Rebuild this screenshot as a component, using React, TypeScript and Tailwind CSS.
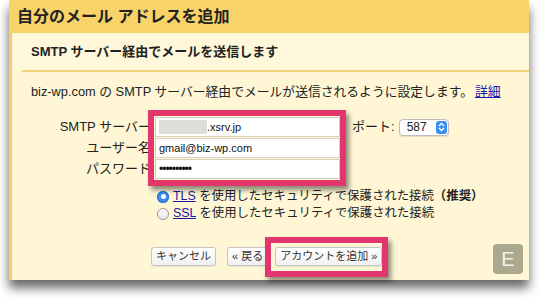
import React from 'react'

const font = { fontFamily: '"Liberation Sans", "Noto Sans CJK JP", sans-serif' }

function PinkFrame({ className }: { className: string }) {
  return (
    <div
      className={`pointer-events-none absolute border-[6px] border-[#e2366f] shadow-[3px_4px_5px_rgba(0,0,0,0.45)] ${className}`}
    />
  )
}

function Radio({ checked }: { checked?: boolean }) {
  return checked ? (
    <span className="flex h-[12px] w-[12px] items-center justify-center rounded-full bg-[#3b8ef0] shadow-[inset_0_0_0_1px_#2a6fc9]">
      <span className="h-[5px] w-[5px] rounded-full bg-white" />
    </span>
  ) : (
    <span className="h-[12px] w-[12px] rounded-full border border-[#9a9a9a] bg-gradient-to-b from-white to-[#e8e8e8]" />
  )
}

function Btn({ children }: { children: React.ReactNode }) {
  return (
    <button className="flex h-[19px] items-center rounded-[3px] border border-[#c4c4c4] bg-gradient-to-b from-white to-[#f1f1f1] px-[4px] text-[11px] text-[#333] shadow-[0_1px_1px_rgba(0,0,0,0.08)]">
      {children}
    </button>
  )
}

export default function App() {
  return (
    <div className="h-[300px] w-[539px] overflow-hidden bg-white" style={font}>
      <div className="ml-[9px] w-[520px] shadow-[0_8px_10px_rgba(0,0,0,0.6)]">
        <div className="flex h-[33px] items-center bg-[#f8d36a] pl-[8px] text-[16px] font-bold text-[#222]">
          自分のメール アドレスを追加
        </div>
        <div className="border-l-[3px] border-[#f3cf6c] bg-[#fef6d4]">
          <div className="flex h-[37px] items-center bg-[#fef7da] pl-[19px] text-[13px] font-bold text-[#222]">
            SMTP サーバー経由でメールを送信します
          </div>
          <div className="ml-[10px] h-[2px] bg-[#f2d478]" />
          <div className="flex h-[40px] items-center pl-[19px] text-[12.8px] text-[#222]">
            biz-wp.com の SMTP サーバー経由でメールが送信されるように設定します。
            <a className="ml-[2px] text-[#1a1aa8] underline">詳細</a>
          </div>

          <div className="mt-[5px] flex">
            <div className="flex w-[139px] flex-col items-end gap-[1px] text-[13px] text-[#222]">
              <div className="flex h-[20px] items-center">SMTP サーバー</div>
              <div className="flex h-[20px] items-center">ユーザー名</div>
              <div className="flex h-[20px] items-center">パスワード</div>
            </div>
            <div className="relative ml-[4px] flex w-[185px] flex-col gap-[1px]">
              <div className="flex h-[20px] items-center border border-[#d4d0c0] bg-white pl-[3px] text-[11px] text-[#111]">
                <span className="h-[14px] w-[48px] bg-[#dcdcd8]" />
                .xsrv.jp
              </div>
              <div className="flex h-[20px] items-center border border-[#d4d0c0] bg-white pl-[3px] text-[11px] text-[#111]">
                gmail@biz-wp.com
              </div>
              <div className="flex h-[20px] items-center border border-[#d4d0c0] bg-white pl-[3px] text-[12px] tracking-[-1px] text-[#111]">
                ••••••••••
              </div>
              <PinkFrame className="-top-[7px] -left-[7px] -right-[6px] -bottom-[7px]" />
            </div>
            <div className="ml-[12px] flex h-[20px] items-center text-[13px] text-[#222]">
              ポート:
              <div className="ml-[4px] flex h-[17px] w-[50px] items-center justify-between rounded-[4px] border border-[#bdbdbd] bg-white pl-[7px] text-[12px] shadow-[0_1px_1px_rgba(0,0,0,0.1)]">
                587
                <span className="mr-[1px] flex h-[13px] w-[11px] flex-col items-center justify-center rounded-[3px] bg-[#3a8ff0] text-white">
                  <svg width="7" height="10" viewBox="0 0 7 10" fill="none" stroke="white" strokeWidth="1.3">
                    <path d="M1 4 L3.5 1.5 L6 4" />
                    <path d="M1 6 L3.5 8.5 L6 6" />
                  </svg>
                </span>
              </div>
            </div>
          </div>

          <div className="mt-[9px] ml-[145px] flex flex-col text-[12.4px] text-[#222]">
            <div className="flex h-[17px] items-center gap-[4px]">
              <Radio checked />
              <span>
                <a className="text-[#1a1aa8] underline">TLS</a> を使用したセキュリティで保護された接続
                <b>（推奨）</b>
              </span>
            </div>
            <div className="flex h-[17px] items-center gap-[4px]">
              <Radio />
              <span>
                <a className="text-[#1a1aa8] underline">SSL</a> を使用したセキュリティで保護された接続
              </span>
            </div>
          </div>

          <div className="flex h-[58px] items-end pb-[14px]">
            <div className="ml-[139px] flex items-center gap-[11px]">
              <Btn>キャンセル</Btn>
              <div className="flex items-center gap-[7px]">
                <Btn>« 戻る</Btn>
                <div className="relative">
                  <Btn>アカウントを追加 »</Btn>
                  <PinkFrame className="-top-[10px] -left-[10px] -right-[6px] -bottom-[11px] border-[5px]" />
                </div>
              </div>
            </div>
            <div className="ml-auto mr-[6px] mb-[-8px] flex h-[30px] w-[30px] items-center justify-center rounded-[4px] bg-[#aaa98d] text-[20px] text-[#f4f3e6]">
              E
            </div>
          </div>
        </div>
      </div>
    </div>
  )
}
